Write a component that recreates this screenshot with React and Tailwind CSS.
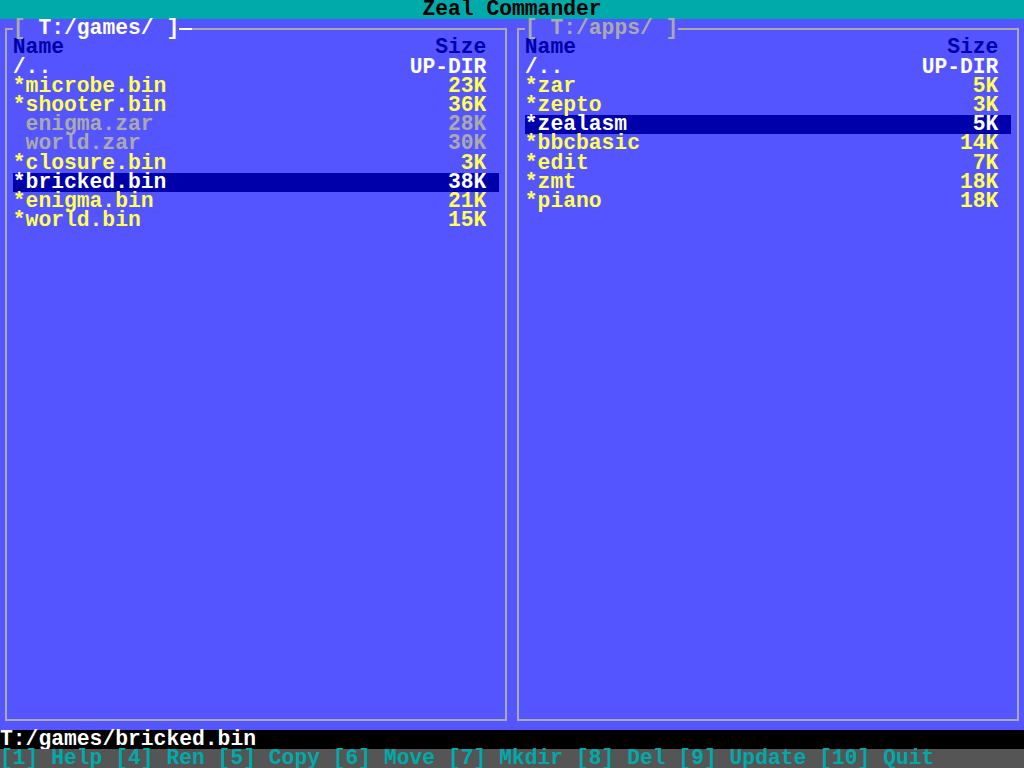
import React from 'react';

const leftFiles = [
  { name: '/..', size: 'UP-DIR', color: 'text-white' },
  { name: '*microbe.bin', size: '23K', color: 'text-[#FFFF55]' },
  { name: '*shooter.bin', size: '36K', color: 'text-[#FFFF55]' },
  { name: ' enigma.zar', size: '28K', color: 'text-[#AAAAAA]' },
  { name: ' world.zar', size: '30K', color: 'text-[#AAAAAA]' },
  { name: '*closure.bin', size: '3K', color: 'text-[#FFFF55]' },
  { name: '*bricked.bin', size: '38K', color: 'text-[#FFFF55]', selected: true },
  { name: '*enigma.bin', size: '21K', color: 'text-[#FFFF55]' },
  { name: '*world.bin', size: '15K', color: 'text-[#FFFF55]' },
];

const rightFiles = [
  { name: '/..', size: 'UP-DIR', color: 'text-white' },
  { name: '*zar', size: '5K', color: 'text-[#FFFF55]' },
  { name: '*zepto', size: '3K', color: 'text-[#FFFF55]' },
  { name: '*zealasm', size: '5K', color: 'text-[#FFFF55]', selected: true },
  { name: '*bbcbasic', size: '14K', color: 'text-[#FFFF55]' },
  { name: '*edit', size: '7K', color: 'text-[#FFFF55]' },
  { name: '*zmt', size: '18K', color: 'text-[#FFFF55]' },
  { name: '*piano', size: '18K', color: 'text-[#FFFF55]' },
];

const Row = ({ name, size, color, selected }) => (
  <div
    className={`flex justify-between h-[19.2px] pr-[12.8px] whitespace-pre ${
      selected ? 'bg-[#0000AA] text-white' : color
    }`}
  >
    <span>{name}</span>
    <span>{size}</span>
  </div>
);

const Panel = ({ path, active, files }) => (
  <div className="relative flex-1 mx-[5.4px] my-[8.6px] border-2 border-[#AAAAAA]">
    {/* path label sits on top of the border line */}
    <div className="absolute left-[5.4px] top-[-10.6px] h-[19.2px] flex items-center bg-[#5555FF] whitespace-pre">
      <span className="text-[#AAAAAA]">[</span>
      <span className={active ? 'text-white' : 'text-[#AAAAAA]'}>{` ${path} ]`}</span>
      {active && (
        <span className="w-[12.8px] h-[19.2px] flex items-center">
          <span className="w-full h-[2px] bg-white"></span>
        </span>
      )}
    </div>
    <div className="pt-[8.6px] px-[5.4px]">
      <div className="flex justify-between h-[19.2px] pr-[12.8px] text-[#0000AA]">
        <span>Name</span>
        <span>Size</span>
      </div>
      {files.map((f) => (
        <Row key={f.name} {...f} />
      ))}
    </div>
  </div>
);

const App = () => {
  return (
    <div className="w-[1024px] h-[768px] flex flex-col bg-[#5555FF] font-['Liberation_Mono',monospace] font-bold text-[21.333px] leading-[19.2px] overflow-hidden">
      <div className="h-[19.2px] bg-[#00AAAA] text-black text-center shrink-0">Zeal Commander</div>
      <div className="h-[710.4px] flex shrink-0">
        <Panel path="T:/games/" active files={leftFiles} />
        <Panel path="T:/apps/" files={rightFiles} />
      </div>
      <div className="h-[19.2px] bg-black text-white whitespace-pre shrink-0">T:/games/bricked.bin</div>
      <div className="h-[19.2px] bg-[#555555] text-[#00AAAA] whitespace-pre shrink-0">
        [1] Help [4] Ren [5] Copy [6] Move [7] Mkdir [8] Del [9] Update [10] Quit
      </div>
    </div>
  );
};

export default App;
